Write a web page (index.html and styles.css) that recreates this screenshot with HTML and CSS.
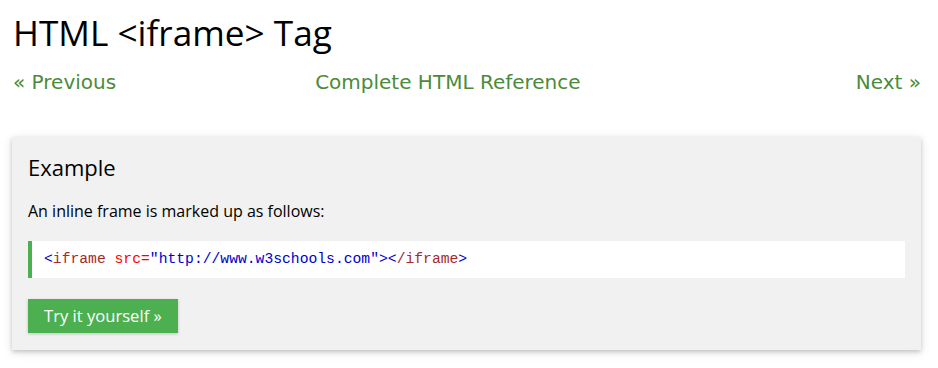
FILE: index.html
```html
<!DOCTYPE html>
<html>
<head>
<meta charset="utf-8">
<title>HTML iframe tag</title>
<link rel="stylesheet" href="styles.css">
</head>
<body>
<div id="main">
  <h1>HTML &lt;iframe&gt; Tag</h1>
  <div class="nav">
    <a href="#">&laquo; Previous</a>
    <a class="ref" href="#">Complete HTML Reference</a>
    <a class="next" href="#">Next &raquo;</a>
  </div>
  <div class="example">
    <h2>Example</h2>
    <p>An inline frame is marked up as follows:</p>
    <div class="code"><span class="tag">&lt;</span><span class="tagname">iframe</span><span class="attr"> src</span><span class="attr">=</span><span class="val">"http://www.w3schools.com"</span><span class="tag">&gt;&lt;</span><span class="tagname">/iframe</span><span class="tag">&gt;</span></div>
    <a class="btn" href="#">Try it yourself &raquo;</a>
  </div>
</div>
</body>
</html>
```

FILE: styles.css
```css
body { margin: 0; background-color: #FFFFFF; font-family: "Open Sans", "Noto Sans", sans-serif; color: #000000; }
#main { padding: 8px 17px 19px 12px; }
h1 { font-size: 35.2px; font-weight: normal; margin: 0 0 0 1px; line-height: 48px; }
.nav { display: flex; margin: 12px 0 0 1px; }
.nav a { color: #4B8B3B; text-decoration: none; font-family: "DejaVu Sans", Verdana, sans-serif; font-size: 20px; line-height: 28px; }
.nav .ref { margin-left: 199px; }
.nav .next { margin-left: auto; }
.example { background-color: #F1F1F1; margin-top: 41px; padding: 13px 16px 17px 16px; box-shadow: 0 2px 4px rgba(0,0,0,0.16), 0 2px 10px rgba(0,0,0,0.12); }
.example h2 { font-size: 22px; font-weight: normal; margin: 0; line-height: 34px; }
.example p { font-size: 16px; margin: 16px 0 19px 0; line-height: 22px; }
.code { background-color: #FFFFFF; border-left: 4px solid #4CAF50; padding: 8px 11px 8px 12px; font-family: "Liberation Mono", "DejaVu Sans Mono", monospace; font-size: 14.7px; line-height: 21px; white-space: nowrap; }
.tag { color: #0000CD; }
.tagname { color: #A52A2A; }
.attr { color: #FF0000; }
.val { color: #0000CD; }
.btn { display: inline-block; margin-top: 21px; background-color: #4CAF50; color: #FFFFFF; text-decoration: none; font-size: 16.6px; padding: 6px 16px; line-height: 22px; box-shadow: 0 1px 3px rgba(0,0,0,0.2); }
```
